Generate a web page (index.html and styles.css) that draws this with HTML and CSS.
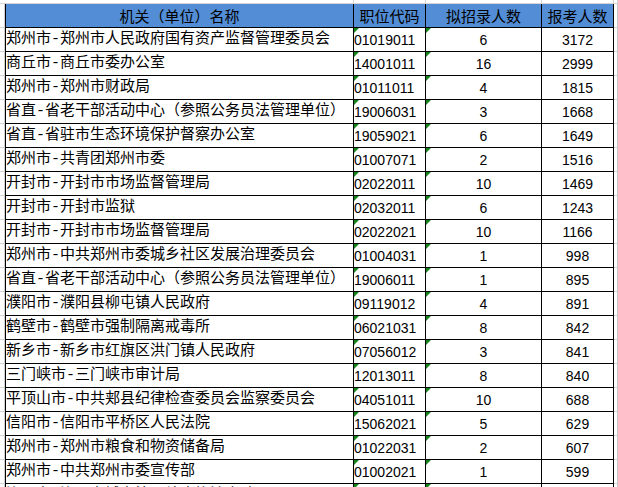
FILE: index.html
```html
<!DOCTYPE html>
<html lang="zh-CN">
<head>
<meta charset="utf-8">
<title>报考人数</title>
<link rel="stylesheet" href="styles.css">
</head>
<body>
<table class="sheet">
  <colgroup>
    <col class="w-gut-l">
    <col class="w-name">
    <col class="w-code">
    <col class="w-plan">
    <col class="w-apply">
    <col class="w-gut-r">
  </colgroup>
  <tbody>
    <tr class="top">
      <td class="g"></td><td class="g"></td><td class="g"></td><td class="g"></td><td class="g"></td><td class="g gr"></td>
    </tr>
    <tr class="head">
      <td class="gl"></td>
      <th class="first">机关（单位）名称</th>
      <th>职位代码</th>
      <th>拟招录人数</th>
      <th>报考人数</th>
      <td class="gr"></td>
    </tr>
    <tr><td class="gl"></td><td class="name">郑州市-郑州市人民政府国有资产监督管理委员会</td><td class="code tri">01019011</td><td class="num tri">6</td><td class="num">3172</td><td class="gr"></td></tr>
    <tr><td class="gl"></td><td class="name">商丘市-商丘市委办公室</td><td class="code tri">14001011</td><td class="num tri">16</td><td class="num">2999</td><td class="gr"></td></tr>
    <tr><td class="gl"></td><td class="name">郑州市-郑州市财政局</td><td class="code tri">01011011</td><td class="num tri">4</td><td class="num">1815</td><td class="gr"></td></tr>
    <tr><td class="gl"></td><td class="name">省直-省老干部活动中心（参照公务员法管理单位）</td><td class="code tri">19006031</td><td class="num tri">3</td><td class="num">1668</td><td class="gr"></td></tr>
    <tr><td class="gl"></td><td class="name">省直-省驻市生态环境保护督察办公室</td><td class="code tri">19059021</td><td class="num tri">6</td><td class="num">1649</td><td class="gr"></td></tr>
    <tr><td class="gl"></td><td class="name">郑州市-共青团郑州市委</td><td class="code tri">01007071</td><td class="num tri">2</td><td class="num">1516</td><td class="gr"></td></tr>
    <tr><td class="gl"></td><td class="name">开封市-开封市市场监督管理局</td><td class="code tri">02022011</td><td class="num tri">10</td><td class="num">1469</td><td class="gr"></td></tr>
    <tr><td class="gl"></td><td class="name">开封市-开封市监狱</td><td class="code tri">02032011</td><td class="num tri">6</td><td class="num">1243</td><td class="gr"></td></tr>
    <tr><td class="gl"></td><td class="name">开封市-开封市市场监督管理局</td><td class="code tri">02022021</td><td class="num tri">10</td><td class="num">1166</td><td class="gr"></td></tr>
    <tr><td class="gl"></td><td class="name">郑州市-中共郑州市委城乡社区发展治理委员会</td><td class="code tri">01004031</td><td class="num tri">1</td><td class="num">998</td><td class="gr"></td></tr>
    <tr><td class="gl"></td><td class="name">省直-省老干部活动中心（参照公务员法管理单位）</td><td class="code tri">19006011</td><td class="num tri">1</td><td class="num">895</td><td class="gr"></td></tr>
    <tr><td class="gl"></td><td class="name">濮阳市-濮阳县柳屯镇人民政府</td><td class="code tri">09119012</td><td class="num tri">4</td><td class="num">891</td><td class="gr"></td></tr>
    <tr><td class="gl"></td><td class="name">鹤壁市-鹤壁市强制隔离戒毒所</td><td class="code tri">06021031</td><td class="num tri">8</td><td class="num">842</td><td class="gr"></td></tr>
    <tr><td class="gl"></td><td class="name">新乡市-新乡市红旗区洪门镇人民政府</td><td class="code tri">07056012</td><td class="num tri">3</td><td class="num">841</td><td class="gr"></td></tr>
    <tr><td class="gl"></td><td class="name">三门峡市-三门峡市审计局</td><td class="code tri">12013011</td><td class="num tri">8</td><td class="num">840</td><td class="gr"></td></tr>
    <tr><td class="gl"></td><td class="name">平顶山市-中共郏县纪律检查委员会监察委员会</td><td class="code tri">04051011</td><td class="num tri">10</td><td class="num">688</td><td class="gr"></td></tr>
    <tr><td class="gl"></td><td class="name">信阳市-信阳市平桥区人民法院</td><td class="code tri">15062021</td><td class="num tri">5</td><td class="num">629</td><td class="gr"></td></tr>
    <tr><td class="gl"></td><td class="name">郑州市-郑州市粮食和物资储备局</td><td class="code tri">01022031</td><td class="num tri">2</td><td class="num">607</td><td class="gr"></td></tr>
    <tr><td class="gl"></td><td class="name">郑州市-中共郑州市委宣传部</td><td class="code tri">01002021</td><td class="num tri">1</td><td class="num">599</td><td class="gr"></td></tr>
    <tr><td class="gl"></td><td class="name">洛阳市-洛阳市城市管理综合执法支队</td><td class="code tri">03017011</td><td class="num tri">2</td><td class="num">590</td><td class="gr"></td></tr>
  </tbody>
</table>
</body>
</html>
```

FILE: styles.css
```css
html, body {
  margin: 0;
  padding: 0;
  background: #ffffff;
  overflow: hidden;
}

body {
  width: 618px;
  height: 487px;
  font-family: "Liberation Sans", "Noto Sans CJK SC", sans-serif;
  font-size: 15px;
  color: #000000;
}

.sheet {
  border-collapse: separate;
  border-spacing: 0;
  table-layout: fixed;
  width: 618px;
}

.w-gut-l { width: 5px; }
.w-name { width: 349px; }
.w-code { width: 72px; }
.w-plan { width: 116px; }
.w-apply { width: 72px; }
.w-gut-r { width: 4px; }

.sheet tr {
  height: 24px;
}

.sheet tr.top {
  height: 4px;
}

.sheet td,
.sheet th {
  padding: 0;
  line-height: 22px;
  white-space: nowrap;
  overflow: hidden;
  font-weight: normal;
  vertical-align: middle;
}

/* spreadsheet gridlines outside the bordered range */
.top .g {
  border-bottom: 1px solid #d4d4d4;
  border-right: 1px solid #d4d4d4;
  height: 3px;
  line-height: 0;
}

.top .g:first-child {
  border-right: none;
}

.gl {
  border-bottom: 1px solid #d4d4d4;
  background: linear-gradient(to left, #d0d0d0 1px, transparent 1px);
}

.gr {
  border-bottom: 1px solid #d4d4d4;
  border-right: 1px solid #c8c8c8;
}

/* header */
.head th {
  background: #538dd5;
  text-align: center;
  border-right: 1px solid #000000;
  border-bottom: 1px solid #000000;
  font-family: "Noto Sans CJK SC", sans-serif;
  font-size: 15px;
}

.head th.first {
  border-left: 1px solid #000000;
}

/* body cells */
.name,
.code,
.num {
  border-right: 1px solid #000000;
  border-bottom: 1px solid #000000;
}

.name {
  border-left: 1px solid #000000;
  padding-left: 2px;
  text-align: left;
  font-family: "Liberation Mono", "Noto Sans CJK SC", monospace;
}

.code {
  padding-left: 3px;
  text-align: left;
  font-size: 14px;
}

.num {
  text-align: center;
  font-size: 14px;
}

/* green "number stored as text" marker */
.tri {
  position: relative;
}

.tri::before {
  content: "";
  position: absolute;
  left: 0;
  top: 0;
  width: 0;
  height: 0;
  border-top: 5px solid #17861d;
  border-right: 5px solid transparent;
}
```
